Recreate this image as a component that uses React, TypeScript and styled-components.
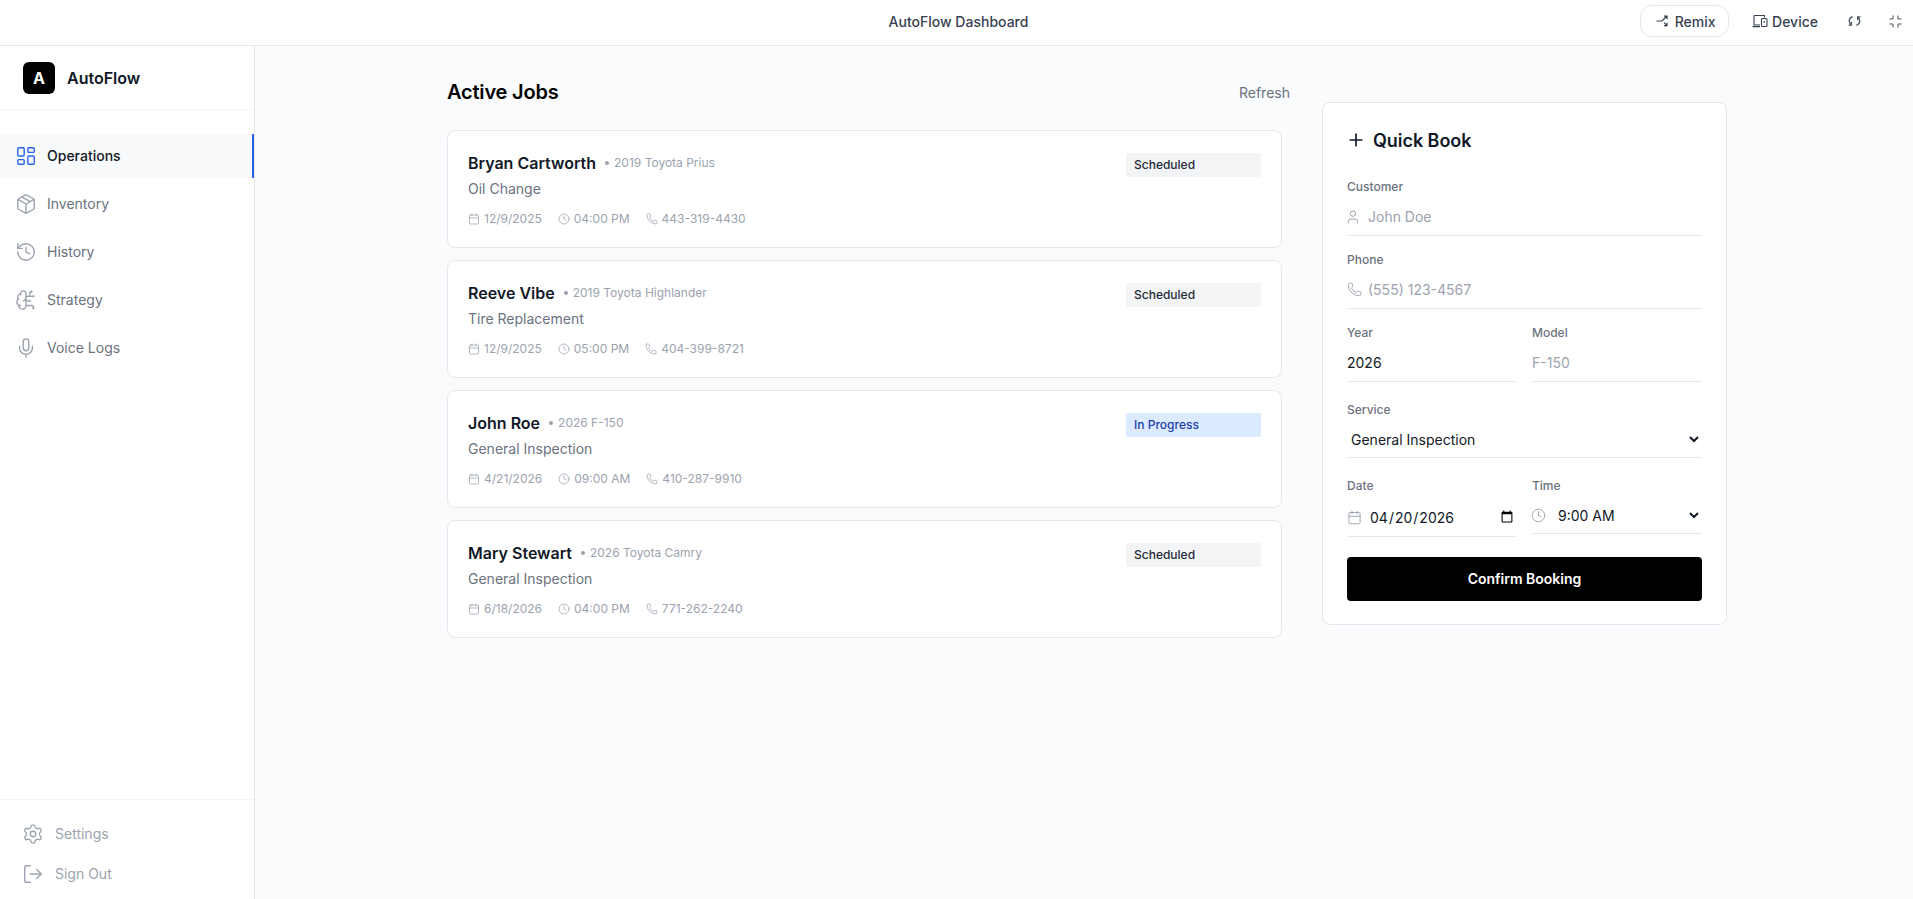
import React from 'react';
import styled, { createGlobalStyle } from 'styled-components';
import { LayoutDashboard, Package, History, BrainCircuit, Mic, Settings, LogOut, Plus, User, Phone, Calendar, Clock } from 'lucide-react';

const Global = createGlobalStyle`
  html, body { margin: 0; padding: 0; height: 100%; overflow: hidden; background: #fff; }
  body { font-family: Inter, "Liberation Sans", sans-serif; color: #111827; }
  * { box-sizing: border-box; }
`;

const Page = styled.div`height: 899px; display: flex; flex-direction: column;`;

const TopBar = styled.header`
  height: 46px; flex: none; display: grid; grid-template-columns: 1fr auto 1fr; align-items: center;
  background: #fff; border-bottom: 1px solid #e5e7eb; padding: 0 11px 3px 15px;
`;
const TopTitle = styled.div`grid-column: 2; font-size: 14px; font-weight: 500; color: #374151;`;
const TopActions = styled.div`grid-column: 3; display: flex; align-items: center; justify-content: flex-end;`;
const RemixButton = styled.div`
  width: 89px; height: 32px; margin-right: 23px; border: 1px solid #e5e7eb; border-radius: 12px; background: #fff;
  display: flex; align-items: center; justify-content: center; gap: 5px; padding-left: 2px; font-size: 14px; font-weight: 500; color: #374151;
`;
const DeviceButton = styled.div`display: flex; align-items: center; gap: 4px; font-size: 14px; font-weight: 500; color: #374151; margin-right: 30px;`;
const BarIcon = styled.svg<{ $gap?: number }>`display: block; flex: none; margin-right: ${p => p.$gap ?? 0}px;`;

const Body = styled.div`flex: 1; display: flex; min-height: 0;`;

const Sidebar = styled.aside`width: 255px; flex: none; background: #fff; border-right: 1px solid #e5e7eb; display: flex; flex-direction: column;`;
const Brand = styled.div`height: 64px; flex: none; display: flex; align-items: center; gap: 12px; padding: 0 23px; border-bottom: 1px solid #f3f4f6;`;
const Logo = styled.div`width: 32px; height: 32px; border-radius: 6px; background: #000; color: #fff; display: flex; align-items: center; justify-content: center; font-size: 16px; font-weight: 700;`;
const BrandName = styled.div`font-size: 16px; font-weight: 600; color: #111827;`;
const Nav = styled.nav`flex: 1; display: flex; flex-direction: column; gap: 4px; padding-top: 24px;`;
const NavItem = styled.div<{ $active?: boolean }>`
  height: 44px; display: flex; align-items: center; gap: 10px; padding-left: 15px; font-size: 14px;
  font-weight: ${p => (p.$active ? 500 : 400)};
  color: ${p => (p.$active ? '#111827' : '#6b7280')};
  background: ${p => (p.$active ? '#f9fafb' : 'transparent')};
  border-right: 2px solid ${p => (p.$active ? '#2563eb' : 'transparent')};
  svg { color: ${p => (p.$active ? '#2563eb' : '#9ca3af')}; flex: none; }
`;
const ItemLabel = styled.span`padding-bottom: 1px;`;
const SideFooter = styled.div`flex: none; border-top: 1px solid #f3f4f6; display: flex; flex-direction: column; gap: 16px; padding: 22px 0 13px 22px;`;
const FooterItem = styled.div`height: 24px; display: flex; align-items: center; gap: 11px; font-size: 14px; color: #9ca3af; svg { flex: none; }`;

const Main = styled.main`flex: 1; min-width: 0; background: #fafbfc; padding: 32px 0 0 192px; display: flex; align-items: flex-start; gap: 32px;`;
const JobsColumn = styled.section`width: 843px; flex: none;`;
const JobsHead = styled.div`height: 28px; margin-bottom: 24px; display: flex; align-items: center; justify-content: space-between;`;
const JobsTitle = styled.h2`margin: 0; font-size: 20px; font-weight: 600; color: #000; letter-spacing: -.2px;`;
const Refresh = styled.span`font-size: 14px; color: #6b7280;`;
const JobList = styled.div`display: flex; flex-direction: column; gap: 12px; padding-right: 8px;`;
const JobCard = styled.article`
  height: 118px; padding: 20px; background: #fff; border: 1px solid #e5e7eb; border-radius: 8px;
  display: flex; justify-content: space-between; align-items: flex-start;
`;
const JobInfo = styled.div`display: flex; flex-direction: column;`;
const JobTop = styled.div`height: 24px; display: flex; align-items: center; gap: 9px;`;
const JobName = styled.span`font-size: 16px; font-weight: 600; color: #111827;`;
const Vehicle = styled.span`font-size: 12px; color: #9ca3af; display: flex; align-items: center; gap: 5px; margin-top: -1px;`;
const Dot = styled.i`width: 4px; height: 4px; border-radius: 50%; background: #9ca3af; display: block;`;
const JobService = styled.div`font-size: 14px; line-height: 20px; margin-top: 4px; color: #6b7280;`;
const JobMeta = styled.div`height: 16px; margin-top: 11px; display: flex; align-items: center; gap: 16px;`;
const MetaItem = styled.span`display: flex; align-items: center; gap: 4px; font-size: 12px; color: #9ca3af; svg { flex: none; margin-top: 2px; }`;
const Badge = styled.span<{ $progress?: boolean }>`
  width: 135px; height: 24px; margin: 2px 0 0 0; padding: 0 0 1px 8px; border-radius: 2px; display: flex; align-items: center;
  font-size: 12px; font-weight: 500;
  background: ${p => (p.$progress ? '#dbeafe' : '#f3f4f6')};
  color: ${p => (p.$progress ? '#1e40af' : '#1f2937')};
`;

const Panel = styled.section`
  width: 405px; flex: none; margin-top: 24px; height: 523px; padding: 24px; background: #fff; border: 1px solid #e5e7eb; border-radius: 8px;
`;
const PanelTitle = styled.h3`margin: 0 0 26px -1px; height: 26px; display: flex; align-items: center; gap: 7px; font-size: 18px; font-weight: 600; color: #111827; letter-spacing: -.05px;`;
const Row = styled.div<{ $top?: number }>`display: grid; grid-template-columns: 169px 170px; gap: 16px; margin-top: ${p => p.$top ?? 0}px;`;
const Field = styled.div<{ $top?: number }>`display: block; margin-top: ${p => p.$top ?? 0}px;`;
const Label = styled.label`display: block; height: 16px; line-height: 16px; margin-bottom: 4px; font-size: 12px; font-weight: 500; color: #6b7280;`;
const InputWrap = styled.div<{ $h?: number; $gap?: number; $lift?: number }>`
  height: ${p => p.$h ?? 37}px; display: flex; align-items: center; gap: ${p => p.$gap ?? 5}px; border-bottom: 1px solid #e5e7eb; padding-bottom: ${p => p.$lift ?? 1}px;
  svg { color: #9ca3af; flex: none; }
`;
const IconSlot = styled.span<{ $w: number; $left?: number }>`width: ${p => p.$w}px; flex: none; display: flex; align-items: center; justify-content: flex-start; margin-left: ${p => p.$left ?? 0}px;`;
const TextInput = styled.input`
  flex: 1; min-width: 0; width: 100%; border: 0; outline: 0; padding: 0; background: transparent; font: 400 14px Inter, sans-serif; color: #111827;
  &::placeholder { color: #9ca3af; opacity: 1; }
`;
const SelectInput = styled.select`
  flex: 1; min-width: 0; width: 100%; height: 100%; border: 0; outline: 0; padding: 0; background: transparent; font: 400 14px Inter, sans-serif; color: #111827;
`;
const DateInput = styled.input`
  flex: 1; min-width: 0; width: 100%; border: 0; outline: 0; padding: 0; background: transparent; font: 400 14px Inter, sans-serif; color: #111827;
`;
const Confirm = styled.button`
  display: block; width: 100%; height: 44px; margin-top: 20px; padding: 0 0 2px; border: 0; border-radius: 4px; background: #000; color: #fff;
  font: 600 14px Inter, sans-serif; cursor: pointer;
`;

const RemixIcon = () => (
  <BarIcon width="14" height="14" viewBox="0 0 14 14" fill="none" stroke="#374151" strokeWidth="1.2">
    <path d="M0.5 7H6L10.5 2.5M8 2.2H11V5.2M8.2 8.6L10.6 11.2M8 11.6H11V8.8" />
  </BarIcon>
);
const DeviceIcon = () => (
  <BarIcon width="16" height="14" viewBox="0 0 16 14" fill="none" stroke="#374151" strokeWidth="1.1">
    <path d="M8 11H2V2.2C2 1.8 2.2 1.5 2.7 1.5H12.5V3.5M0.5 12.6H8" />
    <rect x="9.5" y="4.5" width="5.5" height="8" rx="1" />
    <path d="M12.2 9V7" />
  </BarIcon>
);
const SyncIcon = () => (
  <BarIcon $gap={28} width="13" height="14" viewBox="0 0 13 14" fill="none" stroke="#4b5563" strokeWidth="1.3">
    <path d="M4.6 2.6C2.4 3.4 1 5.6 1.4 7.8C1.6 9 2.2 10 3 10.8M3.4 7.8V11.2H0.6" />
    <path d="M8.4 11.4C10.6 10.6 12 8.4 11.6 6.2C11.4 5 10.8 4 10 3.2M9.6 6.2V2.8H12.4" />
  </BarIcon>
);
const ExpandIcon = () => (
  <BarIcon width="13" height="13" viewBox="0 0 13 13" fill="none" stroke="#4b5563" strokeWidth="1">
    <path d="M4 0.5V4H0.5M9 0.5V4H12.5M4 12.5V9H0.5M9 12.5V9H12.5" />
  </BarIcon>
);

const NAV = [
  { label: 'Operations', Icon: LayoutDashboard, active: true },
  { label: 'Inventory', Icon: Package },
  { label: 'History', Icon: History },
  { label: 'Strategy', Icon: BrainCircuit },
  { label: 'Voice Logs', Icon: Mic },
];

const JOBS = [
  { name: 'Bryan Cartworth', car: '2019 Toyota Prius', service: 'Oil Change', date: '12/9/2025', time: '04:00 PM', phone: '443-319-4430', status: 'Scheduled' },
  { name: 'Reeve Vibe', car: '2019 Toyota Highlander', service: 'Tire Replacement', date: '12/9/2025', time: '05:00 PM', phone: '404-399-8721', status: 'Scheduled' },
  { name: 'John Roe', car: '2026 F-150', service: 'General Inspection', date: '4/21/2026', time: '09:00 AM', phone: '410-287-9910', status: 'In Progress' },
  { name: 'Mary Stewart', car: '2026 Toyota Camry', service: 'General Inspection', date: '6/18/2026', time: '04:00 PM', phone: '771-262-2240', status: 'Scheduled' },
];

export default function App() {
  return (
    <Page>
      <Global />
      <TopBar>
        <TopTitle>AutoFlow Dashboard</TopTitle>
        <TopActions>
          <RemixButton><RemixIcon />Remix</RemixButton>
          <DeviceButton><DeviceIcon />Device</DeviceButton>
          <SyncIcon />
          <ExpandIcon />
        </TopActions>
      </TopBar>
      <Body>
        <Sidebar>
          <Brand><Logo>A</Logo><BrandName>AutoFlow</BrandName></Brand>
          <Nav>
            {NAV.map(({ label, Icon, active }) => (
              <NavItem key={label} $active={active}><Icon size={22} strokeWidth={1.5} /><ItemLabel>{label}</ItemLabel></NavItem>
            ))}
          </Nav>
          <SideFooter>
            <FooterItem><Settings size={22} strokeWidth={1.5} /><ItemLabel>Settings</ItemLabel></FooterItem>
            <FooterItem><LogOut size={22} strokeWidth={1.5} /><ItemLabel>Sign Out</ItemLabel></FooterItem>
          </SideFooter>
        </Sidebar>
        <Main>
          <JobsColumn>
            <JobsHead><JobsTitle>Active Jobs</JobsTitle><Refresh>Refresh</Refresh></JobsHead>
            <JobList>
              {JOBS.map(j => (
                <JobCard key={j.name}>
                  <JobInfo>
                    <JobTop><JobName>{j.name}</JobName><Vehicle><Dot />{j.car}</Vehicle></JobTop>
                    <JobService>{j.service}</JobService>
                    <JobMeta>
                      <MetaItem><Calendar size={12} strokeWidth={1.5} />{j.date}</MetaItem>
                      <MetaItem><Clock size={12} strokeWidth={1.5} />{j.time}</MetaItem>
                      <MetaItem><Phone size={12} strokeWidth={1.5} />{j.phone}</MetaItem>
                    </JobMeta>
                  </JobInfo>
                  <Badge $progress={j.status === 'In Progress'}>{j.status}</Badge>
                </JobCard>
              ))}
            </JobList>
          </JobsColumn>
          <Panel>
            <PanelTitle><Plus size={20} strokeWidth={2} />Quick Book</PanelTitle>
            <Field>
              <Label>Customer</Label>
              <InputWrap><IconSlot $w={18} $left={-2}><User size={16} strokeWidth={1.5} /></IconSlot><TextInput placeholder="John Doe" /></InputWrap>
            </Field>
            <Field $top={16}>
              <Label>Phone</Label>
              <InputWrap><IconSlot $w={16}><Phone size={15} strokeWidth={1.5} /></IconSlot><TextInput placeholder="(555) 123-4567" /></InputWrap>
            </Field>
            <Row $top={16}>
              <Field><Label>Year</Label><InputWrap><TextInput defaultValue="2026" /></InputWrap></Field>
              <Field><Label>Model</Label><InputWrap><TextInput placeholder="F-150" /></InputWrap></Field>
            </Row>
            <Field $top={20}>
              <Label>Service</Label>
              <InputWrap $h={36} $lift={0}>
                <SelectInput defaultValue="General Inspection">
                  <option>Oil Change</option>
                  <option>Tire Replacement</option>
                  <option>General Inspection</option>
                </SelectInput>
              </InputWrap>
            </Field>
            <Row $top={20}>
              <Field>
                <Label>Date</Label>
                <InputWrap $h={39} $gap={7} $lift={0}><Calendar size={15} strokeWidth={1.5} /><DateInput type="date" defaultValue="2026-04-20" /></InputWrap>
              </Field>
              <Field>
                <Label>Time</Label>
                <InputWrap $h={36} $gap={8} $lift={0}><IconSlot $w={15} $left={-1}><Clock size={15} strokeWidth={1.5} /></IconSlot>
                  <SelectInput defaultValue="9:00 AM">
                    <option>9:00 AM</option>
                    <option>10:00 AM</option>
                  </SelectInput>
                </InputWrap>
              </Field>
            </Row>
            <Confirm>Confirm Booking</Confirm>
          </Panel>
        </Main>
      </Body>
    </Page>
  );
}
